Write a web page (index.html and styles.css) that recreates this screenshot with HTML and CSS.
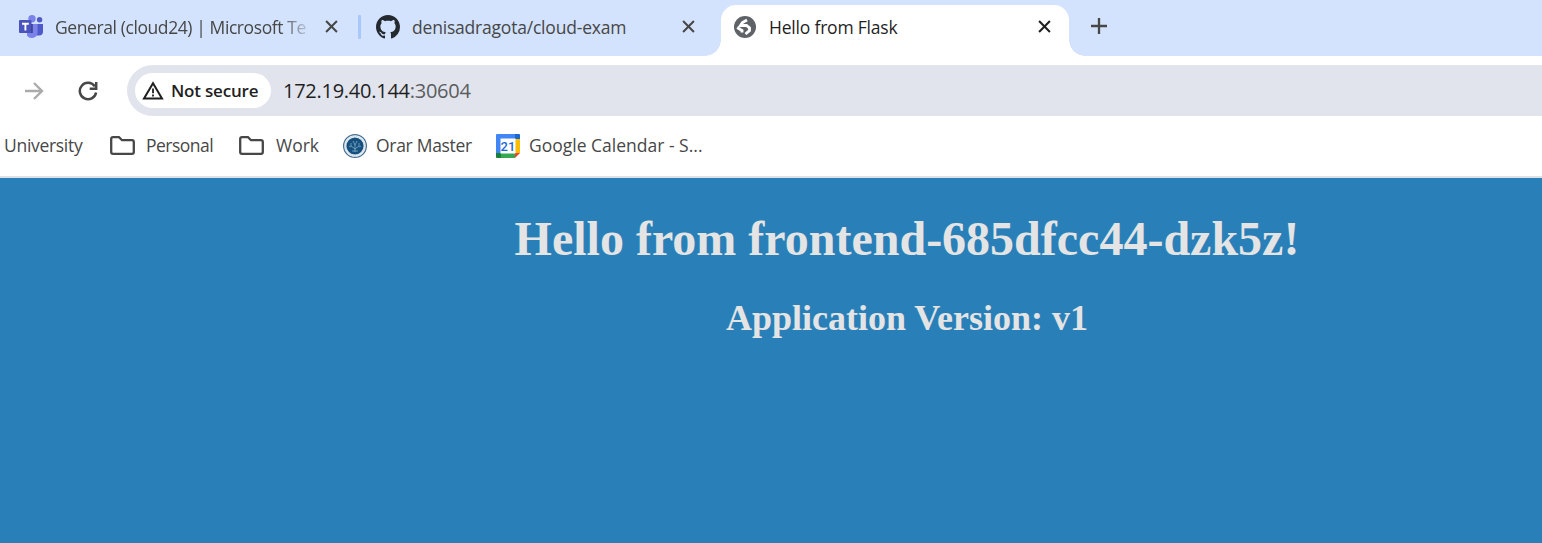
FILE: index.html
```html
<!DOCTYPE html>
<html lang="en">
<head>
<meta charset="utf-8">
<title>Hello from Flask</title>
<link rel="stylesheet" href="styles.css">
</head>
<body>
<div class="tabs">
  <div class="tab tab-teams">
    <svg class="fav" viewBox="0 0 24 24"><circle cx="13" cy="3.700" r="3.700" fill="#7b83eb"/><circle cx="20.600" cy="4.700" r="2.700" fill="#5059c9"/><path d="M16 9h8v7.500a4 4 0 0 1-4 4h-4z" fill="#5059c9"/><path d="M8 9h10.600v8.500a5.800 5.800 0 0 1-10.600 3z" fill="#7b83eb"/><path d="M8 9h5.700v9H8z" fill="#343a83"/><rect y="5" width="12.500" height="13" rx="1" fill="#4b53bc"/><path d="M3 8.700h6.800M6.400 9v6.500" stroke="#fff" stroke-width="1.900"/></svg>
    <span class="title faded t-general">General (cloud24) | Microsoft Te</span>
    <svg class="close" viewBox="0 0 12 12"><path d="M1 1l10 10M11 1L1 11"/></svg>
  </div>
  <i class="divider"></i>
  <div class="tab tab-github">
    <svg class="fav" viewBox="0 0 16 16"><path fill="#24292f" d="M8 0C3.580 0 0 3.580 0 8c0 3.540 2.290 6.530 5.470 7.590.4.070.55-.17.55-.38 0-.19-.01-.82-.01-1.490-2.010.37-2.530-.49-2.690-.94-.09-.23-.48-.94-.82-1.130-.28-.15-.68-.52-.01-.53.63-.01 1.080.58 1.230.82.72 1.210 1.870.87 2.330.66.07-.52.28-.87.51-1.070-1.780-.2-3.640-.89-3.640-3.950 0-.87.31-1.590.82-2.150-.08-.2-.36-1.020.08-2.120 0 0 .67-.21 2.200.82.64-.18 1.320-.27 2-.27s1.360.09 2 .27c1.530-1.040 2.200-.82 2.200-.82.44 1.100.16 1.920.08 2.120.51.56.82 1.270.82 2.150 0 3.070-1.870 3.750-3.650 3.950.29.25.54.73.54 1.480 0 1.070-.01 1.930-.01 2.200 0 .21.15.46.55.38A8.010 8.010 0 0 0 16 8c0-4.420-3.580-8-8-8z"/></svg>
    <span class="title t-github">denisadragota/cloud-exam</span>
    <svg class="close" viewBox="0 0 12 12"><path d="M1 1l10 10M11 1L1 11"/></svg>
  </div>
  <div class="tab tab-active">
    <svg class="globe" viewBox="0 0 22 22"><circle cx="11" cy="11" r="11" fill="#5f6368"/><path d="M13 4 8.500 6.500 6.500 9.500h6l3 2.500v2.500L11.500 18M3.200 11.500 8 14.500v2" fill="none" stroke="#fff" stroke-width="2.900"/></svg>
    <span class="title t-flask">Hello from Flask</span>
    <svg class="close" viewBox="0 0 12 12"><path d="M1 1l10 10M11 1L1 11"/></svg>
  </div>
  <svg class="plus" viewBox="0 0 16 16"><path d="M8 0v16M0 8h16"/></svg>
</div>
<div class="toolbar">
  <svg class="forward" viewBox="0 0 20 20"><path d="M1 10h17M10 2l8 8-8 8"/></svg>
  <svg class="reload" viewBox="0 0 20 20"><path d="M16.800 5.400A8.200 8.200 0 1 0 18.100 11.500M18.200 1v6.700h-6.500"/></svg>
  <div class="omnibox">
    <div class="chip">
      <svg class="warn" viewBox="0 0 22 19"><path d="M11 2.200L2 17.500h18z" fill="none" stroke="#1f1f1f" stroke-width="2"/><path d="M11 7.500v4.700M11 13.500v2" stroke="#1f1f1f" stroke-width="1.800"/></svg>
      <span class="t-secure">Not secure</span>
    </div>
    <span class="url">172.19.40.144<span class="port">:30604</span></span>
  </div>
</div>
<div class="bookmarks">
  <span class="bm-text t-university">University</span>
  <svg class="folder" viewBox="0 0 25 19"><path d="M3 1.200h6l3 3h10q1.800 0 1.800 1.800v10q0 1.800-1.800 1.800H3q-1.800 0-1.800-1.800V3q0-1.800 1.800-1.800z"/></svg>
  <span class="bm-text t-personal">Personal</span>
  <svg class="folder" viewBox="0 0 25 19"><path d="M3 1.200h6l3 3h10q1.800 0 1.800 1.800v10q0 1.800-1.800 1.800H3q-1.800 0-1.800-1.800V3q0-1.800 1.800-1.800z"/></svg>
  <span class="bm-text t-work">Work</span>
  <svg class="bm-icon" viewBox="0 0 24 24"><circle cx="12" cy="12" r="11.400" fill="#e8eff5" stroke="#466f90" stroke-width="1.200"/><circle cx="12" cy="12" r="9.600" fill="none" stroke="#b4cbdc" stroke-width=".8" stroke-dasharray="1 1"/><circle cx="12" cy="12" r="8.600" fill="#15507f"/><path d="M12 18v-7M12 15l-4-3V9M12 15l4-3V9M12 11l-2-4M12 11l2-4M6 12l2 1M18 12l-2 1M9 17h6" fill="none" stroke="#90b7d1" stroke-width=".7"/></svg>
  <span class="bm-text t-orar">Orar Master</span>
  <svg class="bm-icon" viewBox="0 0 24 24"><path d="M0 1q0-1 1-1h19v5H5v15H0z" fill="#4285f4"/><path d="M19 0h4q1 0 1 1v4h-5z" fill="#1967d2"/><path d="M19 5h5v14h-5z" fill="#fbbc04"/><path d="M5 19h14v5H5z" fill="#34a853"/><path d="M0 19h5v5H1q-1 0-1-1z" fill="#188038"/><path d="M19 19h5l-5 5z" fill="#ea4335"/><path d="M4.500 4.500h15v15h-15z" fill="#fff"/><text x="12" y="16.800" text-anchor="middle" class="day">21</text></svg>
  <span class="bm-text t-calendar">Google Calendar - S...</span>
</div>
<main class="page">
  <h1>Hello from frontend-685dfcc44-dzk5z!</h1>
  <h2>Application Version: v1</h2>
</main>
</body>
</html>
```
FILE: styles.css
```css
* { box-sizing: border-box; }
body { margin: 0; height: 543px; overflow: hidden; display: flex; flex-direction: column; background: #fff; font-family: "Open Sans", "Noto Sans", sans-serif; color: #474747; }
svg { display: block; flex: none; }
span { white-space: nowrap; }
.tabs { height: 56px; flex: none; display: flex; background: #d3e3fd; }
.tab { display: flex; align-items: center; padding-bottom: 3px; flex: none; }
.tab-teams { width: 358px; padding-left: 19px; }
.tab-github { width: 360px; padding-left: 15px; }
.tab-active { position: relative; width: 348px; height: 51px; margin-top: 5px; padding: 0 0 8px 13px; background: #fff; border-radius: 15px 15px 0 0; color: #1f1f1f; }
.tab-active::before, .tab-active::after { content: ""; position: absolute; bottom: 0; width: 16px; height: 16px; }
.tab-active::before { left: -16px; background: radial-gradient(circle at 0 0, transparent 15.500px, #fff 16px); }
.tab-active::after { right: -16px; background: radial-gradient(circle at 100% 0, transparent 15.500px, #fff 16px); }
.fav { width: 24px; height: 24px; margin-right: 12px; }
.globe { width: 22px; height: 22px; margin-right: 13px; }
.title { font-size: 17.500px; line-height: 24px; padding-top: 1px; margin-right: auto; }
.t-general { letter-spacing: -.41px; }
.t-github { letter-spacing: -.2px; }
.t-flask { letter-spacing: -.2px; }
.faded { width: 256px; -webkit-mask-image: linear-gradient(90deg, #000 225px, transparent 258px); mask-image: linear-gradient(90deg, #000 225px, transparent 258px); }
.close { width: 13px; height: 13px; stroke: #474747; stroke-width: 1.900; margin-right: 20px; }
.tab-github .close { margin-right: 26px; }
.tab-active .close { margin-right: 18px; stroke: #1f1f1f; }
.divider { width: 3px; height: 24px; margin-top: 15px; background: #a8c7fa; border-radius: 1px; }
.plus { width: 16px; height: 16px; margin: 18px 0 0 22px; stroke: #474747; stroke-width: 2.300; }
.toolbar { height: 64px; flex: none; display: flex; align-items: center; padding: 5px 0 0 24px; }
.forward { width: 20px; height: 20px; fill: none; stroke: #ababab; stroke-width: 2.400; }
.reload { width: 20px; height: 20px; margin-left: 34px; fill: none; stroke: #474747; stroke-width: 2.500; }
.omnibox { flex: 1; height: 51px; margin-left: 29px; padding-left: 8px; display: flex; align-items: center; background: #e1e4ec; border-radius: 26px 0 0 26px; }
.chip { width: 136px; height: 35px; border-radius: 18px; background: #fff; display: flex; align-items: center; padding-left: 7px; gap: 7px; color: #1f1f1f; font-size: 17px; font-weight: 600; }
.t-secure { letter-spacing: -.2px; }
.warn { width: 22px; height: 19px; }
.url { margin-left: 12px; font-size: 20px; letter-spacing: -.26px; color: #1f1f1f; }
.port { color: #5a5c60; }
.bookmarks { height: 58px; flex: none; display: flex; align-items: center; padding: 0 0 5px 4px; border-bottom: 2px solid #dce3e5; }
.bm-text { font-size: 17.500px; padding-bottom: 1px; }
.folder { width: 25px; height: 19px; fill: none; stroke: #474747; stroke-width: 2.300; margin-right: 11px; }
.bm-icon { width: 24px; height: 24px; margin-right: 9px; }
.day { font: 500 13px Roboto, sans-serif; fill: #1a68d8; }
.t-university { width: 106px; letter-spacing: -.3px; }
.t-personal { width: 93px; letter-spacing: -.5px; }
.t-work { width: 67px; margin-left: 1px; }
.t-orar { width: 120px; letter-spacing: -.3px; }
.page { flex: 1; background: #2980b9; padding: 33px 0 0 272px; text-align: center; color: #e4e4e4; font-family: "Liberation Serif", "Times New Roman", serif; }
h1 { margin: 0; font-size: 48px; line-height: 56px; }
h2 { margin: 30px 0 0; font-size: 36px; line-height: 42px; }
```
